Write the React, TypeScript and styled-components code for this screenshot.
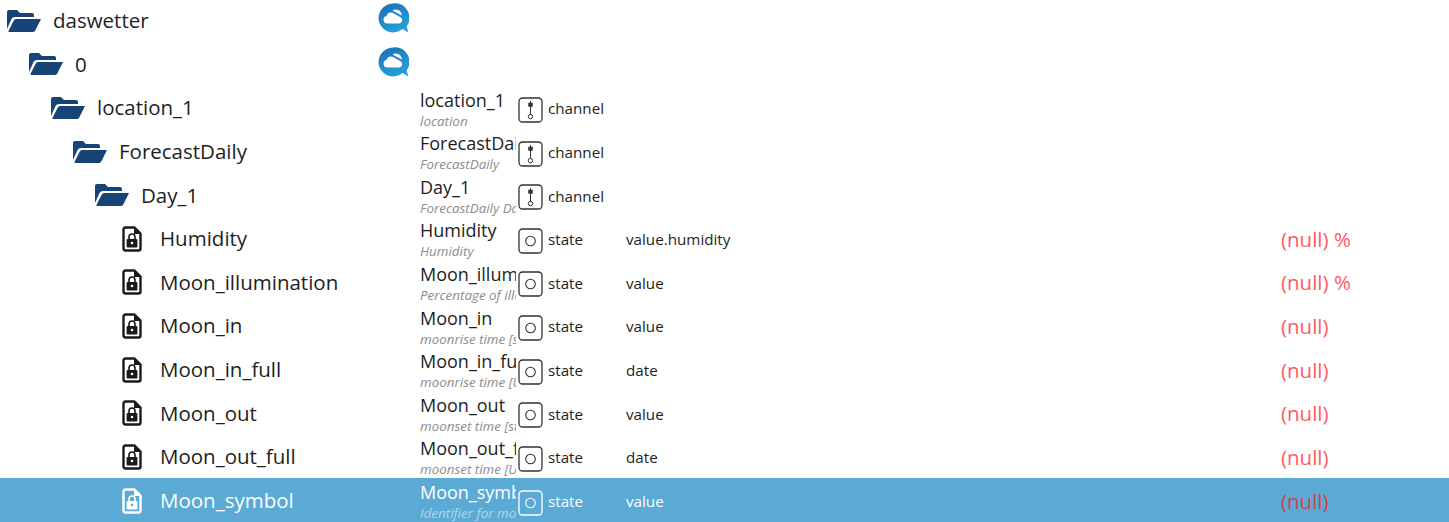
import React from "react";
import styled, { createGlobalStyle } from "styled-components";

const Global = createGlobalStyle`
  html, body { margin: 0; padding: 0; background: #fff; overflow: hidden; }
  body { font-family: "Open Sans", "Noto Sans", "Liberation Sans", sans-serif; }
`;

const Table = styled.div`
  width: 1449px;
  height: 522px;
  overflow: hidden;
  display: flex;
  flex-direction: column;
`;

const Row = styled.div<{ $selected?: boolean }>`
  flex: none;
  height: 43.6px;
  display: grid;
  grid-template-columns: 420px 98px 108px 655px 1fr;
  align-items: center;
  background: ${(p) => (p.$selected ? "#5aaad5" : "transparent")};
  color: ${(p) => (p.$selected ? "#fff" : "#1e1e1e")};
  &:first-child { margin-top: -1px; }
  &:last-child { height: 45px; margin-top: -1px; padding-top: 1px; box-sizing: border-box; }
`;

const TreeCell = styled.div<{ $indent: number }>`
  display: flex;
  align-items: center;
  height: 100%;
  padding-left: ${(p) => p.$indent}px;
  box-sizing: border-box;
`;

const FolderIcon = styled.svg`
  width: 34px;
  height: 22px;
  margin-right: 12px;
  flex: none;
`;

const FileIcon = styled.svg`
  width: 20px;
  height: 26px;
  margin-right: 18px;
  flex: none;
`;

const TreeName = styled.span`
  font-size: 20.5px;
  white-space: nowrap;
  position: relative;
  top: -0.5px;
`;

const Logo = styled.svg`
  width: 31px;
  height: 31px;
  margin-left: auto;
  margin-right: 11px;
  margin-bottom: 4px;
  flex: none;
`;

const NameCell = styled.div`
  overflow: hidden;
  white-space: nowrap;
  display: flex;
  flex-direction: column;
  height: 100%;
  box-sizing: border-box;
  justify-content: flex-start;
  margin-right: 2px;
  padding-top: 1.5px;
`;

const NameMain = styled.span`
  font-size: 18px;
  line-height: 25px;
`;

const NameSub = styled.span<{ $selected?: boolean }>`
  font-size: 13.4px;
  line-height: 17.5px;
  font-style: italic;
  color: ${(p) => (p.$selected ? "#b4d8ec" : "#8c8c8c")};
`;

const TypeCell = styled.div`
  display: flex;
  align-items: center;
  font-size: 15.2px;
`;

const TypeLabel = styled.span`
  position: relative;
  top: 0.5px;
`;

const TypeBox = styled.svg`
  width: 25px;
  height: 26px;
  margin-right: 5px;
  margin-top: 4px;
  flex: none;
`;

const RoleCell = styled.div`
  font-size: 15.2px;
  padding-top: 1px;
`;

const ValueCell = styled.div<{ $selected?: boolean }>`
  font-size: 20.5px;
  color: ${(p) => (p.$selected ? "#d63f4c" : "#ff5a5f")};
  white-space: nowrap;
`;

const Folder = () => (
  <FolderIcon viewBox="0 0 34 22">
    <path fill="#164477" d="M2 0H10L13 3H25Q27 3 27 5V7H8Q5.5 7 4.5 9L0 19V2Q0 0 2 0Z" />
    <path fill="#164477" d="M9 9H34L28.5 20Q28 22 26 22H2Q1 22 1.6 20.8L6.5 11Q7.5 9 9 9Z" />
  </FolderIcon>
);

const LockedFile = ({ color, hole }: { color: string; hole: string }) => (
  <FileIcon viewBox="0 0 20 26">
    <path
      fill="none"
      stroke={color}
      strokeWidth="2.4"
      strokeLinejoin="round"
      d="M3.5 1.5H12.5L18.5 7.5V22.5Q18.5 24.5 16.5 24.5H3.5Q1.5 24.5 1.5 22.5V3.5Q1.5 1.5 3.5 1.5Z"
    />
    <path fill={color} d="M12 1.5L18.5 8H12Z" />
    <rect x="4.6" y="13" width="10.8" height="8.4" rx="1" fill={color} />
    <path fill="none" stroke={color} strokeWidth="1.6" d="M7 13.5V11A3 3 0 0 1 13 11V13.5" />
    <circle cx="10" cy="17" r="1.3" fill={hole} />
  </FileIcon>
);

const CloudLogo = ({ id }: { id: string }) => (
  <Logo viewBox="0 0 31 31">
    <defs>
      <linearGradient id={id} x1="0.2" y1="0" x2="0.7" y2="1">
        <stop offset="0" stopColor="#1b72b8" />
        <stop offset="1" stopColor="#27a3de" />
      </linearGradient>
    </defs>
    <path
      fill={`url(#${id})`}
      d="M15 0.5A14.5 14.5 0 1 0 24.5 26L30.5 29.5L28.6 23.5A14.5 14.5 0 0 0 15 0.5Z"
    />
    <path
      fill="#fff"
      d="M9.5 20.5A3.8 3.8 0 0 1 8.5 13A5 5 0 0 1 14.5 9.8L22.5 14.2A3.4 3.4 0 0 1 21.5 20.5Z"
    />
    <path fill="#fff" d="M14.5 7.6A6 6 0 0 1 23.8 12.6Z" />
  </Logo>
);

const Kind = ({ kind, color }: { kind: "channel" | "state"; color: string }) => (
  <TypeBox viewBox="0 0 25 26">
    <rect x="1" y="1" width="23" height="24" rx="3.5" fill="none" stroke={color} strokeWidth="1.3" />
    {kind === "state" ? (
      <circle cx="12.5" cy="13" r="4.8" fill="none" stroke={color} strokeWidth="1.1" />
    ) : (
      <g fill="none" stroke={color} strokeWidth="1">
        <path d="M12.5 4V17.5" />
        <rect x="10.8" y="6.2" width="3.4" height="3" fill={color} />
        <circle cx="12.5" cy="19.6" r="2.2" />
      </g>
    )}
  </TypeBox>
);

type Item = {
  name: string;
  level?: number;
  logo?: boolean;
  label?: string;
  sub?: string;
  type?: "channel" | "state";
  role?: string;
  value?: string;
  selected?: boolean;
};

const items: Item[] = [
  { name: "daswetter", level: 0, logo: true },
  { name: "0", level: 1, logo: true },
  { name: "location_1", level: 2, label: "location_1", sub: "location", type: "channel" },
  { name: "ForecastDaily", level: 3, label: "ForecastDaily", sub: "ForecastDaily", type: "channel" },
  { name: "Day_1", level: 4, label: "Day_1", sub: "ForecastDaily Day 1", type: "channel" },
  { name: "Humidity", label: "Humidity", sub: "Humidity", type: "state", role: "value.humidity", value: "(null) %" },
  { name: "Moon_illumination", label: "Moon_illumination", sub: "Percentage of illumination", type: "state", role: "value", value: "(null) %" },
  { name: "Moon_in", label: "Moon_in", sub: "moonrise time [start]", type: "state", role: "value", value: "(null)" },
  { name: "Moon_in_full", label: "Moon_in_full", sub: "moonrise time [UTC]", type: "state", role: "date", value: "(null)" },
  { name: "Moon_out", label: "Moon_out", sub: "moonset time [start]", type: "state", role: "value", value: "(null)" },
  { name: "Moon_out_full", label: "Moon_out_full", sub: "moonset time [UTC]", type: "state", role: "date", value: "(null)" },
  { name: "Moon_symbol", label: "Moon_symbol", sub: "Identifier for moon", type: "state", role: "value", value: "(null)", selected: true },
];

export default function App() {
  return (
    <Table>
      <Global />
      {items.map((it) => {
        const isFolder = it.level !== undefined;
        const fg = it.selected ? "#fff" : "#333";
        return (
          <Row key={it.name} $selected={it.selected}>
            <TreeCell $indent={isFolder ? 7 + 22 * (it.level as number) : 122}>
              {isFolder ? <Folder /> : <LockedFile color={it.selected ? "#fff" : "#1a1a1a"} hole={it.selected ? "#5aaad5" : "#fff"} />}
              <TreeName>{it.name}</TreeName>
              {it.logo && <CloudLogo id={`logo-${it.name}`} />}
            </TreeCell>
            <NameCell>
              {it.label && <NameMain>{it.label}</NameMain>}
              {it.sub && <NameSub $selected={it.selected}>{it.sub}</NameSub>}
            </NameCell>
            <TypeCell>
              {it.type && (
                <>
                  <Kind kind={it.type} color={fg} />
                  <TypeLabel>{it.type}</TypeLabel>
                </>
              )}
            </TypeCell>
            <RoleCell>{it.role}</RoleCell>
            <ValueCell $selected={it.selected}>{it.value}</ValueCell>
          </Row>
        );
      })}
    </Table>
  );
}
